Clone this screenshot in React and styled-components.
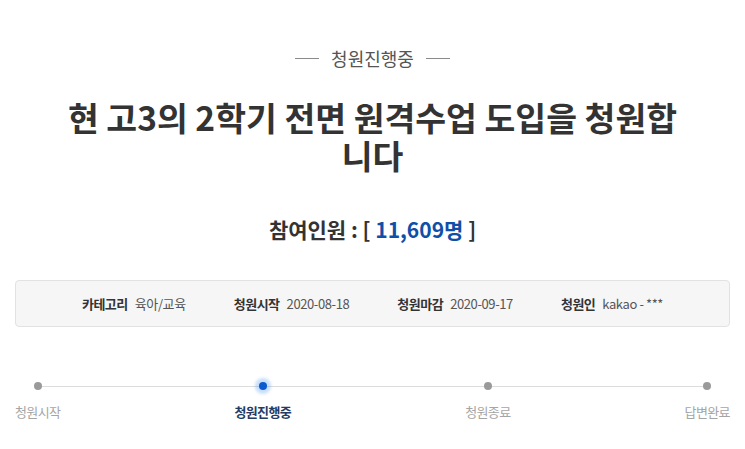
import React from "react";
import styled, { createGlobalStyle } from "styled-components";

const Global = createGlobalStyle`
  html, body { margin: 0; padding: 0; background: #fff; }
  body { font-family: "Noto Sans CJK KR", "Noto Sans", sans-serif; color: #333; }
`;

const Page = styled.div`
  padding: 47px 15px 0;
  display: flex;
  flex-direction: column;
  align-items: center;
`;

const Badge = styled.div`
  display: flex;
  align-items: center;
  gap: 12px;
  font-size: 18px;
  line-height: 22px;
  color: #555;
  &::before, &::after {
    content: "";
    width: 24px;
    height: 1px;
    background: #8a8a8a;
  }
`;

const Title = styled.h1`
  margin: 29px 0 0;
  max-width: 625px;
  text-align: center;
  font-size: 33.5px;
  line-height: 38px;
  font-weight: 700;
  color: #333;
`;

const Count = styled.div`
  margin-top: 41px;
  font-size: 21px;
  line-height: 28px;
  font-weight: 700;
  color: #333;
`;

const Num = styled.span`
  color: #0f4fa8;
`;

const InfoBox = styled.div`
  margin-top: 37px;
  align-self: stretch;
  height: 45px;
  box-sizing: content-box;
  border: 1px solid #e2e2e2;
  border-radius: 4px;
  background: #f6f6f6;
  display: flex;
  justify-content: center;
  align-items: center;
  gap: 48px;
  font-size: 13px;
`;

const InfoItem = styled.div`
  display: flex;
  gap: 7px;
  align-items: baseline;
`;

const Label = styled.span`
  font-weight: 700;
  color: #333;
  letter-spacing: -0.5px;
`;

const Value = styled.span`
  color: #555;
  letter-spacing: -0.4px;
`;

const Steps = styled.div`
  margin-top: 55px;
  align-self: stretch;
  position: relative;
  display: flex;
  justify-content: space-between;
  &::before {
    content: "";
    position: absolute;
    left: 23px;
    right: 24px;
    top: 4px;
    height: 1px;
    background: #dcdcdc;
  }
`;

const Step = styled.div`
  position: relative;
  display: flex;
  flex-direction: column;
  align-items: center;
  gap: 13px;
`;

const Dot = styled.span`
  width: 8px;
  height: 8px;
  border-radius: 50%;
  background: ${(p) => (p.$active ? "#0b5bcf" : "#9a9a9a")};
  box-shadow: ${(p) =>
    p.$active ? "0 0 3px 4px rgba(60,140,240,0.28)" : "none"};
`;

const StepLabel = styled.span`
  font-size: 13px;
  line-height: 18px;
  letter-spacing: -0.6px;
  color: ${(p) => (p.$active ? "#253b66" : "#a5a5a5")};
  font-weight: ${(p) => (p.$active ? 700 : 400)};
`;

const info = [
  ["카테고리", "육아/교육"],
  ["청원시작", "2020-08-18"],
  ["청원마감", "2020-09-17"],
  ["청원인", "kakao - ***"],
];

const steps = [
  ["청원시작", false],
  ["청원진행중", true],
  ["청원종료", false],
  ["답변완료", false],
];

export default function App() {
  return (
    <>
      <Global />
      <Page>
        <Badge>청원진행중</Badge>
        <Title>현 고3의 2학기 전면 원격수업 도입을 청원합니다</Title>
        <Count>
          참여인원 : [ <Num>11,609명</Num> ]
        </Count>
        <InfoBox>
          {info.map(([l, v]) => (
            <InfoItem key={l}>
              <Label>{l}</Label>
              <Value>{v}</Value>
            </InfoItem>
          ))}
        </InfoBox>
        <Steps>
          {steps.map(([l, a]) => (
            <Step key={l}>
              <Dot $active={a} />
              <StepLabel $active={a}>{l}</StepLabel>
            </Step>
          ))}
        </Steps>
      </Page>
    </>
  );
}
